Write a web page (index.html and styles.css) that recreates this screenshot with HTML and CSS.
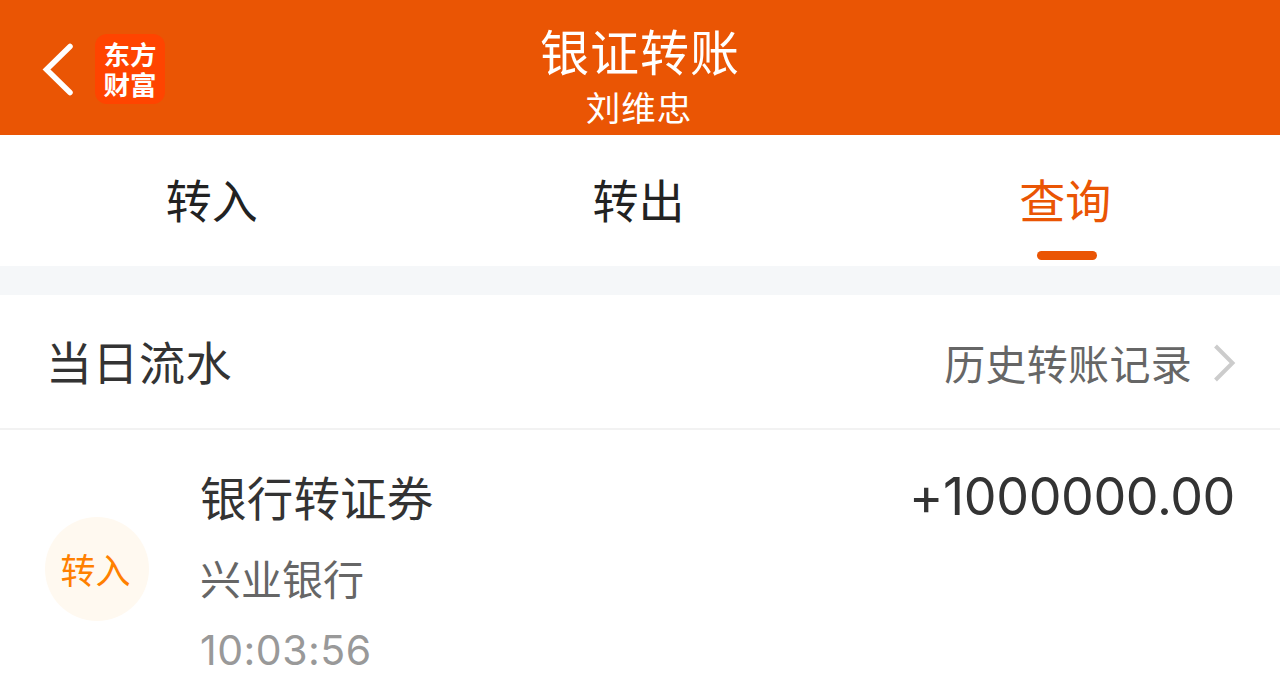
FILE: index.html
```
<!DOCTYPE html>
<html lang="zh-CN">
<head>
  <meta charset="UTF-8">
  <title>银证转账</title>
  <link rel="stylesheet" href="styles.css">
</head>
<body>

  <header class="header">
    <div class="header-left">
      <svg class="back" width="32" height="54" viewBox="0 0 32 54">
        <path d="M28 4.500 L4.500 27.500 L28 50.500" fill="none" stroke="#fff" stroke-width="5.500" stroke-linecap="round"/>
      </svg>
      <div class="logo">东方<br>财富</div>
    </div>
    <div class="header-title">
      <h1>银证转账</h1>
      <p>刘维忠</p>
    </div>
  </header>

  <nav class="tabs">
    <a class="tab"><span>转入</span></a>
    <a class="tab"><span>转出</span></a>
    <a class="tab active"><span>查询</span></a>
  </nav>

  <section class="section-head">
    <h2>当日流水</h2>
    <a class="history">
      <span>历史转账记录</span>
      <svg width="24" height="40" viewBox="0 0 24 40">
        <path d="M3.500 4 L20.500 21 L3.500 38" fill="none" stroke="#ccc" stroke-width="4"/>
      </svg>
    </a>
  </section>

  <section class="record">
    <div class="badge">转入</div>
    <div class="info">
      <div class="type">银行转证券</div>
      <div class="bank">兴业银行</div>
      <div class="time">10:03:56</div>
    </div>
    <div class="amount">+1000000.00</div>
  </section>

</body>
</html>
```
FILE: styles.css
```
* {
  box-sizing: border-box;
  margin: 0;
  padding: 0;
}

body {
  height: 681px;
  overflow: hidden;
  background-color: #fff;
  color: #333;
  font-family: "Noto Sans CJK SC", sans-serif;
}

h1, h2 {
  font-weight: normal;
}

/* 顶部标题栏 */
.header {
  display: grid;
  grid-template-columns: 1fr auto 1fr;
  height: 135px;
  background-color: #ea5504;
  color: #fff;
}

.header-left {
  display: flex;
  align-items: flex-start;
  padding: 34px 0 0 42px;
}

.back {
  margin: 8px 21px 0 0;
}

.logo {
  width: 70px;
  height: 70px;
  padding-top: 5px;
  border-radius: 12px;
  background-color: #ff4400;
  font-size: 26.5px;
  font-weight: bold;
  line-height: 29.5px;
  text-align: center;
}

.header-title {
  padding-top: 19px;
  text-align: center;
}

.header-title h1 {
  font-size: 49px;
  letter-spacing: 1px;
  line-height: 62px;
}

.header-title p {
  padding-right: 2px;
  font-size: 34.5px;
  letter-spacing: 1px;
  line-height: 51px;
}

.tabs {
  display: flex;
  height: 131px;
}

.tab {
  display: flex;
  flex: 1;
  flex-direction: column;
  align-items: center;
  padding-top: 29px;
  color: #222;
  font-size: 46px;
  line-height: 68px;
}

.tab span {
  padding-right: 3px;
}

.tab.active {
  color: #ea5504;
}

.active::after {
  content: "";
  width: 60px;
  height: 9px;
  margin-top: 19px;
  border-radius: 5px;
  background-color: #ea5504;
}

.section-head {
  display: flex;
  justify-content: space-between;
  align-items: center;
  height: 164px;
  padding: 0 44px 0 46px;
  border-top: 29px solid #f5f7f9;
  border-bottom: 2px solid #f2f2f2;
}

.section-head h2 {
  padding-bottom: 3px;
  font-size: 46px;
  letter-spacing: 0.5px;
  line-height: 60px;
}

.history {
  display: flex;
  align-items: center;
  gap: 20px;
  color: #666;
  font-size: 41px;
  letter-spacing: 0.3px;
  line-height: 60px;
}

/* 流水记录 */
.record {
  display: flex;
  padding: 0 45px;
}

.badge {
  width: 104px;
  height: 104px;
  margin-top: 87px;
  padding-right: 3px;
  border-radius: 50%;
  background-color: #fff9f0;
  color: #ff8000;
  font-size: 35px;
  line-height: 103px;
  text-align: center;
}

.info {
  flex: 1;
  padding: 32px 0 0 51px;
}

.type {
  font-size: 46.5px;
  letter-spacing: 0.2px;
  line-height: 68px;
}

.bank {
  margin-top: 17px;
  color: #666;
  font-size: 41px;
  line-height: 60px;
}

.time {
  margin-top: 13px;
  color: #999;
  font-family: Inter, sans-serif;
  font-size: 41px;
  letter-spacing: 0.5px;
  line-height: 60px;
}

.amount {
  padding-top: 33px;
  font-family: Inter, sans-serif;
  font-feature-settings: "calt" 0;
  font-size: 52px;
  letter-spacing: -0.4px;
  line-height: 68px;
}
```
